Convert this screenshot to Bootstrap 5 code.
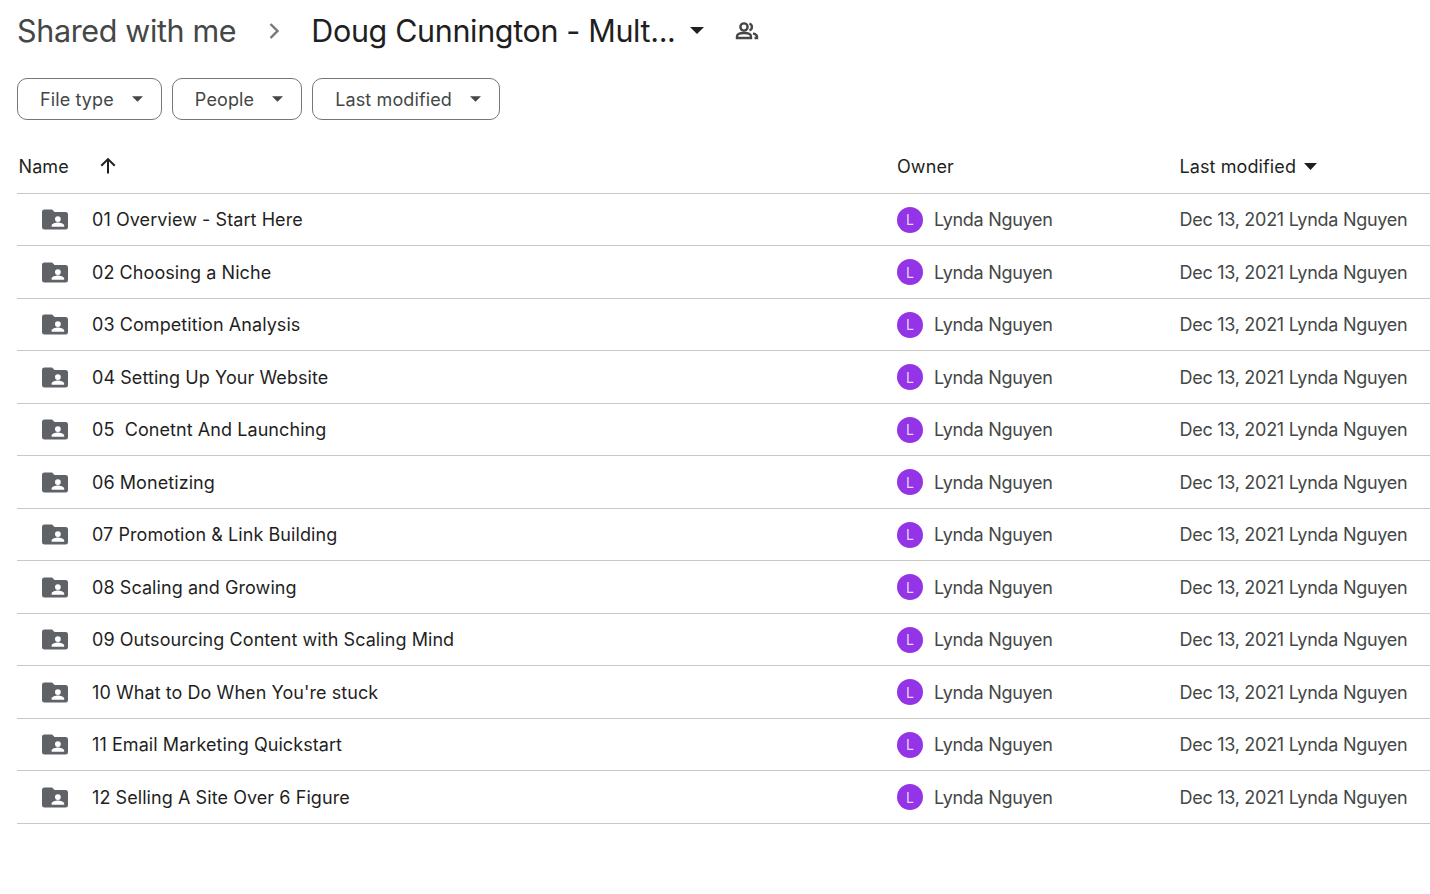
<!DOCTYPE html>
<html lang="en">
<head>
  <meta charset="UTF-8" />
  <meta name="viewport" content="width=device-width, initial-scale=1" />
  <title>Doug Cunnington - Shared with me</title>
  <link href="https://cdn.jsdelivr.net/npm/bootstrap@5.3.0/dist/css/bootstrap.min.css" rel="stylesheet" />
  <style>
    body {
      background: #fff;
      font-family: Inter, Roboto, "Liberation Sans", sans-serif;
      color: #1f1f1f;
      overflow: hidden;
    }
    .drive-page { padding-left: 17px; }
    .crumbs { height: 61px; font-size: 30.5px; letter-spacing: -0.35px; }
    .crumb-root { color: #444746; }
    .crumb-sep { margin: 0 31px 0 32px; flex: none; }
    .crumb-caret { margin: 0 31px 0 14px; flex: none; }
    .filters { margin-top: 17px; height: 42px; gap: 10px; }
    .filter-btn {
      height: 42px;
      border: 1px solid #747775;
      border-radius: 10px;
      padding: 0 18px 0 22px;
      background: #fff;
      color: #444746;
      font-size: 18px;
      letter-spacing: 0.12px;
      gap: 18px;
    }
    .head-row { height: 52.6px; margin-top: 21px; font-size: 18px; letter-spacing: 0.1px; border-bottom: 1px solid #c7c7c7; padding-bottom: 1px; }
    .file-row { height: 52.5px; border-bottom: 1px solid #c7c7c7; font-size: 18px; letter-spacing: 0.07px; padding-top: 1px; }
    .col-name { width: 880px; flex: none; }
    .col-owner { width: 282.5px; flex: none; }
    .head-name { padding-left: 1.5px; }
    .sort-arrow { margin-left: 30px; }
    .folder-ico { margin: 0 24px 0 25px; flex: none; }
    .owner-dot {
      width: 26px;
      height: 26px;
      border-radius: 50%;
      background: #9334e6;
      color: #e8d5fa;
      font-size: 14px;
      margin-right: 11px;
    }
    .muted-text { color: #444746; white-space: nowrap; letter-spacing: -0.28px; }
  </style>
</head>
<body>
  <div class="drive-page">
    <div class="crumbs d-flex align-items-center">
      <span class="crumb-root">Shared with me</span>
      <svg class="crumb-sep" width="12" height="18" viewBox="0 0 12 18"><path d="M2.5 2l7 7-7 7" fill="none" stroke="#747775" stroke-width="2.4"/></svg>
      <span>Doug Cunnington - Mult...</span>
      <svg class="crumb-caret" width="14" height="7" viewBox="0 0 14 7"><path d="M0 0h14L7 7z" fill="#1f1f1f"/></svg>
      <svg width="24" height="20" viewBox="0 0 24 20"><g fill="none" stroke="#444746" stroke-width="2.4"><circle cx="9" cy="6" r="3.6"/><path d="M2 17v-1.500c0-2.500 3.500-3.500 7-3.500s7 1 7 3.500V17z"/><path d="M14.500 2.600a3.600 3.600 0 0 1 0 6.800M18 12.300c2.200.6 4 1.600 4 3.200V17h-2.500"/></g></svg>
    </div>

    <div class="filters d-flex">
      <button type="button" class="filter-btn d-flex align-items-center">File type <svg width="11" height="6" viewBox="0 0 12 6"><path d="M0 0h12L6 6z" fill="#444746"/></svg></button>
      <button type="button" class="filter-btn d-flex align-items-center">People <svg width="11" height="6" viewBox="0 0 12 6"><path d="M0 0h12L6 6z" fill="#444746"/></svg></button>
      <button type="button" class="filter-btn d-flex align-items-center">Last modified <svg width="11" height="6" viewBox="0 0 12 6"><path d="M0 0h12L6 6z" fill="#444746"/></svg></button>
    </div>

    <div class="head-row d-flex align-items-center">
      <div class="col-name head-name d-flex align-items-center">Name
        <svg class="sort-arrow" width="18" height="18" viewBox="0 0 18 18"><path d="M9 16.500V2.500M2.300 8.800L9 2.100l6.700 6.700" fill="none" stroke="#1f1f1f" stroke-width="2"/></svg>
      </div>
      <div class="col-owner">Owner</div>
      <div class="d-flex align-items-center gap-2">Last modified <svg width="13" height="7" viewBox="0 0 13 7"><path d="M0 0h13L6.500 7z" fill="#1f1f1f"/></svg></div>
    </div>

    <div id="rows"></div>
  </div>

  <script>
    const names = [
      "01 Overview - Start Here", "02 Choosing a Niche", "03 Competition Analysis",
      "04 Setting Up Your Website", "05\u00a0 Conetnt And Launching", "06 Monetizing",
      "07 Promotion & Link Building", "08 Scaling and Growing", "09 Outsourcing Content with Scaling Mind",
      "10 What to Do When You're stuck", "11 Email Marketing Quickstart", "12 Selling A Site Over 6 Figure"
    ];
    const folder = '<svg class="folder-ico" width="26" height="21" viewBox="0 0 27 21"><path fill-rule="evenodd" fill="#5f6368" d="M2.500 0h8l2.500 2.600h11.500A2.500 2.500 0 0 1 27 5v13.500a2.500 2.500 0 0 1-2.500 2.500h-22A2.500 2.500 0 0 1 0 18.500v-16A2.500 2.500 0 0 1 2.500 0zM16.500 7a3 3 0 1 0 0 6 3 3 0 0 0 0-6zM10 18h13v-1.500c0-2-4.300-3-6.500-3s-6.500 1-6.500 3z"/></svg>';
    document.getElementById("rows").innerHTML = names.map(n => `
      <div class="file-row d-flex align-items-center">
        <div class="col-name d-flex align-items-center">${folder}<span>${n.replace("&", "&amp;")}</span></div>
        <div class="col-owner d-flex align-items-center">
          <span class="owner-dot d-flex align-items-center justify-content-center">L</span>
          <span class="muted-text">Lynda Nguyen</span>
        </div>
        <div class="muted-text">Dec 13, 2021 Lynda Nguyen</div>
      </div>`).join("");
  </script>
  <script src="https://cdn.jsdelivr.net/npm/bootstrap@5.3.0/dist/js/bootstrap.bundle.min.js"></script>
</body>
</html>
